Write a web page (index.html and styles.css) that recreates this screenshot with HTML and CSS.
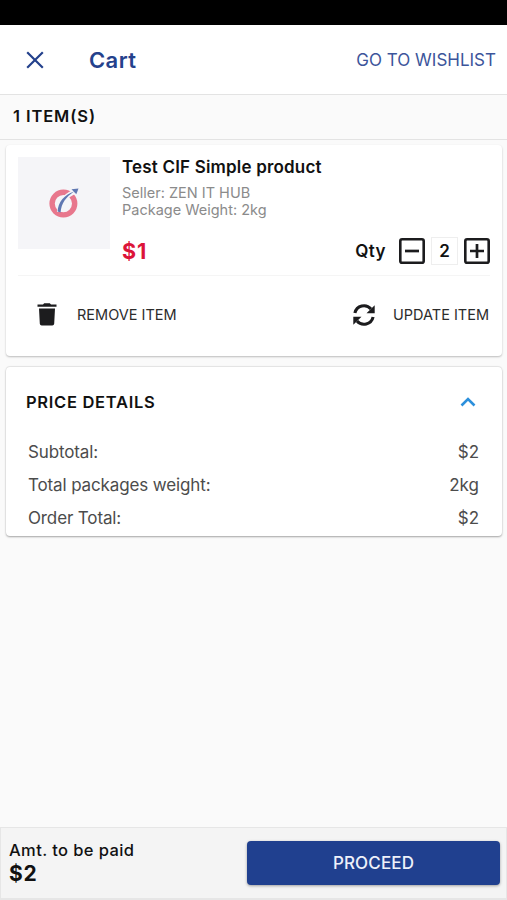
FILE: index.html
```html
<!DOCTYPE html>
<html lang="en">
<head>
    <meta charset="UTF-8">
    <meta name="viewport" content="width=device-width, initial-scale=1.0">
    <title>Cart</title>
    <link rel="stylesheet" href="styles.css">
</head>
<body>
    <div class="app">
        <div class="status-bar"></div>

        <header class="header">
            <svg class="close-icon" width="18" height="18" viewBox="0 0 18 18">
                <path d="M1.2 1.2L16.8 16.8M16.8 1.2L1.2 16.8" fill="none" stroke="#24418c" stroke-width="2.2"/>
            </svg>
            <h1 class="title">Cart</h1>
            <a class="wishlist-link">GO TO WISHLIST</a>
        </header>

        <div class="item-count">1 ITEM(S)</div>

        <main class="content">
            <section class="card item-card">
                <div class="product">
                    <div class="product-image">
                        <svg width="30" height="30" viewBox="0 0 30 30">
                            <circle cx="14.4" cy="15.6" r="11.3" fill="none" stroke="#e8778d" stroke-width="5.4"/>
                            <path d="M10.2 24C10.5 15 16 8 25 3.8" fill="none" stroke="#f5f5f8" stroke-width="4.6"/>
                            <path d="M8.6 23.6C9 14 15 7 25 3.4C17 9 12.3 15 11.6 24.4Z" fill="#6078b2"/>
                            <path d="M22.5 1.2L29.5 .5L27.3 6.2Z" fill="#6078b2"/>
                        </svg>
                    </div>
                    <div class="product-info">
                        <div class="product-name">Test CIF Simple product</div>
                        <div class="product-meta">Seller: ZEN IT HUB</div>
                        <div class="product-meta">Package Weight: 2kg</div>
                        <div class="price-row">
                            <span class="price">$1</span>
                            <span class="qty-label">Qty</span>
                            <svg width="26" height="26" viewBox="0 0 26 26">
                                <rect x="1.3" y="1.3" width="23.4" height="23.4" rx="1.8" fill="none" stroke="#1c1c1e" stroke-width="2.6"/>
                                <path d="M6 13H20" stroke="#1c1c1e" stroke-width="2.7"/>
                            </svg>
                            <span class="qty-value">2</span>
                            <svg width="26" height="26" viewBox="0 0 26 26">
                                <rect x="1.3" y="1.3" width="23.4" height="23.4" rx="1.8" fill="none" stroke="#1c1c1e" stroke-width="2.6"/>
                                <path d="M6 13H20M13 6V20" stroke="#1c1c1e" stroke-width="2.7"/>
                            </svg>
                        </div>
                    </div>
                </div>
                <div class="actions">
                    <div class="action">
                        <svg class="trash-icon" width="20" height="23" viewBox="0 0 20 23">
                            <path d="M.5 1.5H6L7.2.3H12.8L14 1.5H19.5V3.8H.5ZM2 5.6H18L17.2 20.8Q17 22.5 15.3 22.5H4.7Q3 22.5 2.8 20.8Z" fill="#1c1c1e"/>
                        </svg>
                        <span>REMOVE ITEM</span>
                    </div>
                    <div class="action">
                        <svg class="update-icon" width="22" height="22" viewBox="0 0 22 22">
                            <path d="M1.9 9A9.3 9.3 0 0 1 18 5M20.1 13A9.3 9.3 0 0 1 4 17" fill="none" stroke="#1c1c1e" stroke-width="3.1"/>
                            <path d="M21.7 1.3V9.3H13.5ZM.3 20.7V12.7H8.5Z" fill="#1c1c1e"/>
                        </svg>
                        <span>UPDATE ITEM</span>
                    </div>
                </div>
            </section>

            <section class="card price-card">
                <div class="price-header">
                    <h2 class="price-title">PRICE DETAILS</h2>
                    <svg width="16" height="10" viewBox="0 0 16 10">
                        <path d="M1.5 8.5L8 2L14.5 8.5" fill="none" stroke="#2c90dc" stroke-width="2.6"/>
                    </svg>
                </div>
                <div class="price-line">
                    <span class="price-line-label">Subtotal:</span>
                    <span>$2</span>
                </div>
                <div class="price-line">
                    <span class="price-line-label">Total packages weight:</span>
                    <span>2kg</span>
                </div>
                <div class="price-line">
                    <span class="price-line-label">Order Total:</span>
                    <span>$2</span>
                </div>
            </section>
        </main>

        <footer class="footer">
            <div class="payable">
                <div class="payable-label">Amt. to be paid</div>
                <div class="payable-amount">$2</div>
            </div>
            <button class="proceed-button">PROCEED</button>
        </footer>
    </div>
</body>
</html>
```
FILE: styles.css
```css
* {
    margin: 0;
    padding: 0;
    box-sizing: border-box;
}

body {
    background-color: #fafafa;
    color: #111;
    font-family: Inter, Roboto, sans-serif;
}

svg {
    display: block;
    flex-shrink: 0;
}

.app {
    height: 900px;
    display: flex;
    flex-direction: column;
    overflow: hidden;
}

.status-bar {
    height: 25px;
    background: #000;
}

.header {
    height: 70px;
    display: flex;
    align-items: center;
    padding: 0 11px 0 26px;
    background: white;
    border-bottom: 1px solid #e3e3e3;
}

.title {
    margin-left: 45px;
    font-size: 22px;
    font-weight: 600;
    letter-spacing: 0.4px;
    color: #24418c;
}

.wishlist-link {
    margin-left: auto;
    font-size: 17px;
    color: #3c559b;
}

.item-count {
    height: 45px;
    padding-left: 13px;
    line-height: 43px;
    font-size: 16.5px;
    font-weight: 600;
    letter-spacing: 0.9px;
    border-bottom: 1px solid #e3e3e3;
}

.content {
    flex: 1;
    padding: 5px 5px 0 6px;
}

.card {
    background: white;
    border-radius: 4px;
    box-shadow: 0 1px 2px rgba(0,0,0,0.25);
}

.item-card {
    height: 211px;
    padding: 12px 12px 0;
    margin-bottom: 11px;
}

.product {
    height: 119px;
    display: flex;
    border-bottom: 1px solid #f5f5f5;
}

.product-image {
    width: 92px;
    height: 92px;
    display: flex;
    align-items: center;
    justify-content: center;
    background: #f5f5f8;
}

.product-info {
    flex: 1;
    padding-left: 12px;
}

.product-name {
    height: 27px;
    line-height: 21px;
    font-size: 17px;
    font-weight: 600;
    letter-spacing: 0.18px;
}

.product-meta {
    line-height: 17px;
    font-size: 14.5px;
    color: #8b8b8b;
}

.price-row {
    height: 28px;
    display: flex;
    align-items: center;
    margin-top: 19px;
}

.price {
    margin-right: auto;
    font-size: 21.5px;
    font-weight: 700;
    letter-spacing: 1px;
    color: #dc1439;
}

.qty-label {
    margin-right: 13px;
    font-size: 17px;
    font-weight: 600;
    letter-spacing: 0.4px;
}

.qty-value {
    width: 27px;
    height: 28px;
    margin: 0 6px;
    border: 1px solid #eee;
    line-height: 26px;
    text-align: center;
    font-size: 17px;
    font-weight: 600;
}

.actions {
    height: 77px;
    display: flex;
    align-items: center;
    justify-content: space-between;
    padding: 0 1px 0 19px;
    font-size: 14.5px;
    color: #2c2c2c;
}

.action {
    display: flex;
    align-items: center;
}

.trash-icon {
    margin-right: 20px;
}

.update-icon {
    margin-right: 18px;
}

.price-card {
    height: 169px;
    padding: 0 23px 0 20px;
    box-shadow: 0 1px 2px rgba(0,0,0,0.35), 0 -1px 1px rgba(0,0,0,0.08);
}

.price-header {
    height: 69px;
    display: flex;
    align-items: center;
    justify-content: space-between;
    padding-right: 3px;
}

.price-title {
    font-size: 16.5px;
    font-weight: 600;
    letter-spacing: 0.7px;
}

.price-line {
    display: flex;
    justify-content: space-between;
    padding-left: 2px;
    line-height: 33px;
    font-size: 17px;
    color: #4c4c4c;
}

.price-line-label {
    letter-spacing: -0.13px;
}

.footer {
    height: 73px;
    display: flex;
    padding: 13px 6px 0 8px;
    background: #f4f4f4;
    border: 1px solid #e6e6e6;
    border-bottom-width: 2px;
}

.payable {
    flex: 1;
}

.payable-label {
    line-height: 19px;
    font-size: 16.5px;
    font-weight: 500;
    letter-spacing: 0.4px;
}

.payable-amount {
    line-height: 28px;
    font-size: 21px;
    font-weight: 700;
    letter-spacing: 0.8px;
}

.proceed-button {
    width: 253px;
    height: 44px;
    border: none;
    border-radius: 4px;
    background: #20408f;
    color: #eef1fa;
    font-family: inherit;
    font-size: 17px;
    font-weight: 500;
    letter-spacing: 0.15px;
    box-shadow: 0 1px 3px rgba(0,0,0,0.35);
}
```
